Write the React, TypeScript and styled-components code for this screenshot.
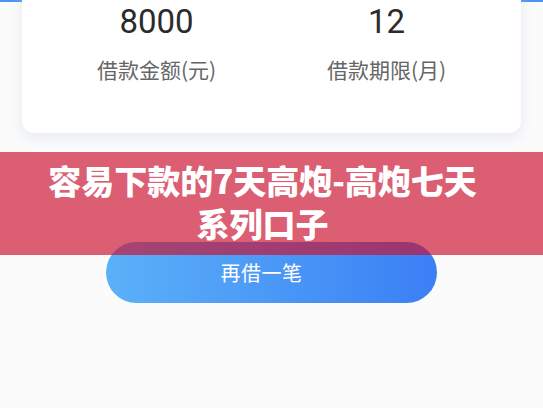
import React from 'react';
import styled, { createGlobalStyle } from 'styled-components';

const GlobalStyle = createGlobalStyle`
  html, body {
    margin: 0;
    padding: 0;
    width: 543px;
    height: 408px;
    overflow: hidden;
    background: #fbfbfc;
    font-family: Roboto, "Noto Sans CJK SC", sans-serif;
  }
`;

const Page = styled.div`
  position: relative;
  width: 543px;
  height: 408px;
  overflow: hidden;
  background: linear-gradient(#4d93f3 0 2px, #fbfbfc 2px);
`;

const Card = styled.div`
  margin: -24px 22px 0;
  height: 157px;
  box-sizing: border-box;
  padding-top: 26px;
  background: #fff;
  border-radius: 0 0 12px 12px;
  box-shadow: 0 4px 14px rgba(190, 200, 220, 0.35);
  display: flex;
  justify-content: center;
`;

const Stat = styled.div`
  width: 230px;
  display: flex;
  flex-direction: column;
  align-items: center;
`;

const Value = styled.div`
  font-family: Roboto, sans-serif;
  font-size: 33px;
  line-height: 40px;
  color: #2b2b2b;
`;

const Label = styled.div`
  margin-top: 13px;
  font-family: "Noto Sans CJK SC", sans-serif;
  font-size: 21px;
  line-height: 28px;
  color: #666;
`;

const Action = styled.button`
  display: block;
  margin: 109px auto 0;
  width: 331px;
  height: 61px;
  border: none;
  border-radius: 31px;
  background: linear-gradient(90deg, #5bb1f8 0%, #3b7ff5 100%);
  color: #fff;
  font-family: "Noto Sans CJK SC", sans-serif;
  font-size: 20px;
  letter-spacing: 0.5px;
  padding: 0 20px 0 0;
`;

// caption strip laid over the page, tinted so the button shows through
const Banner = styled.div`
  position: absolute;
  left: 0;
  right: 0;
  top: 152px;
  height: 103px;
  box-sizing: border-box;
  padding: 7px 18px 0 0;
  background: rgba(203, 16, 48, 0.67);
  color: #fff;
  text-align: center;
  font-family: "Noto Sans CJK SC", sans-serif;
  font-weight: 900;
  font-size: 33px;
  line-height: 43px;
`;

const stats = [
  { value: '8000', label: '借款金额(元)' },
  { value: '12', label: '借款期限(月)' },
];

export default function App() {
  return (
    <Page>
      <GlobalStyle />
      <Card>
        {stats.map(s => (
          <Stat key={s.label}>
            <Value>{s.value}</Value>
            <Label>{s.label}</Label>
          </Stat>
        ))}
      </Card>
      <Action>再借一笔</Action>
      <Banner>
        容易下款的7天高炮-高炮七天
        <br />
        系列口子
      </Banner>
    </Page>
  );
}
